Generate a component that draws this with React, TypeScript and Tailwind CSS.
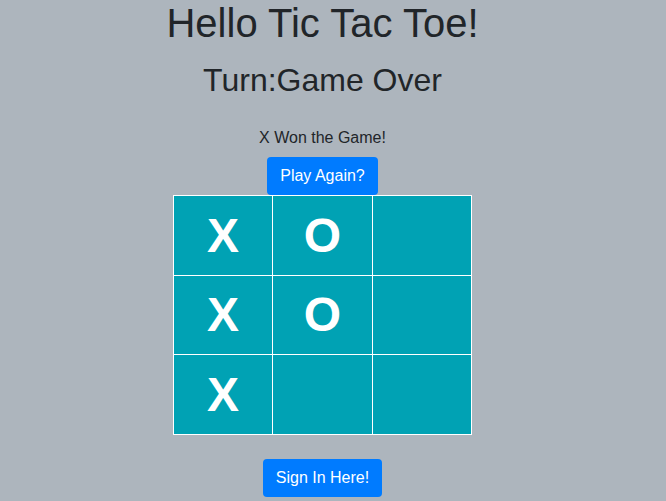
import React from "react";

const board = ["X", "O", "", "X", "O", "", "X", "", ""];

export default function App() {
  return (
    <div
      className="min-h-[501px] bg-[#adb5bd] text-[#212529] pr-[21px] flex flex-col items-center"
      style={{ fontFamily: '"Liberation Sans", Arial, sans-serif' }}
    >
      <h1 className="text-[40px] leading-[48px] mt-[-1px] mb-[8px] font-normal">Hello Tic Tac Toe!</h1>
      <h2 className="text-[32px] leading-[38px] mt-[6px] font-normal">Turn:Game Over</h2>
      <p className="text-[16px] leading-[24px] mt-[27px]">X Won the Game!</p>
      <button className="mt-[7px] h-[38px] px-[13px] rounded-[4px] bg-[#007bff] text-white text-[16px]">
        Play Again?
      </button>
      <div className="grid grid-cols-[98px_99px_98px] grid-rows-[79px_78px_79px] gap-[1px] p-[1px] bg-white">
        {board.map((v, i) => (
          <div
            key={i}
            className="bg-[#00a2b4] flex items-center justify-center text-white text-[48px] font-bold leading-none"
          >
            {v}
          </div>
        ))}
      </div>
      <button className="mt-[24px] h-[38px] px-[13px] rounded-[4px] bg-[#007bff] text-white text-[16px]">
        Sign In Here!
      </button>
    </div>
  );
}
